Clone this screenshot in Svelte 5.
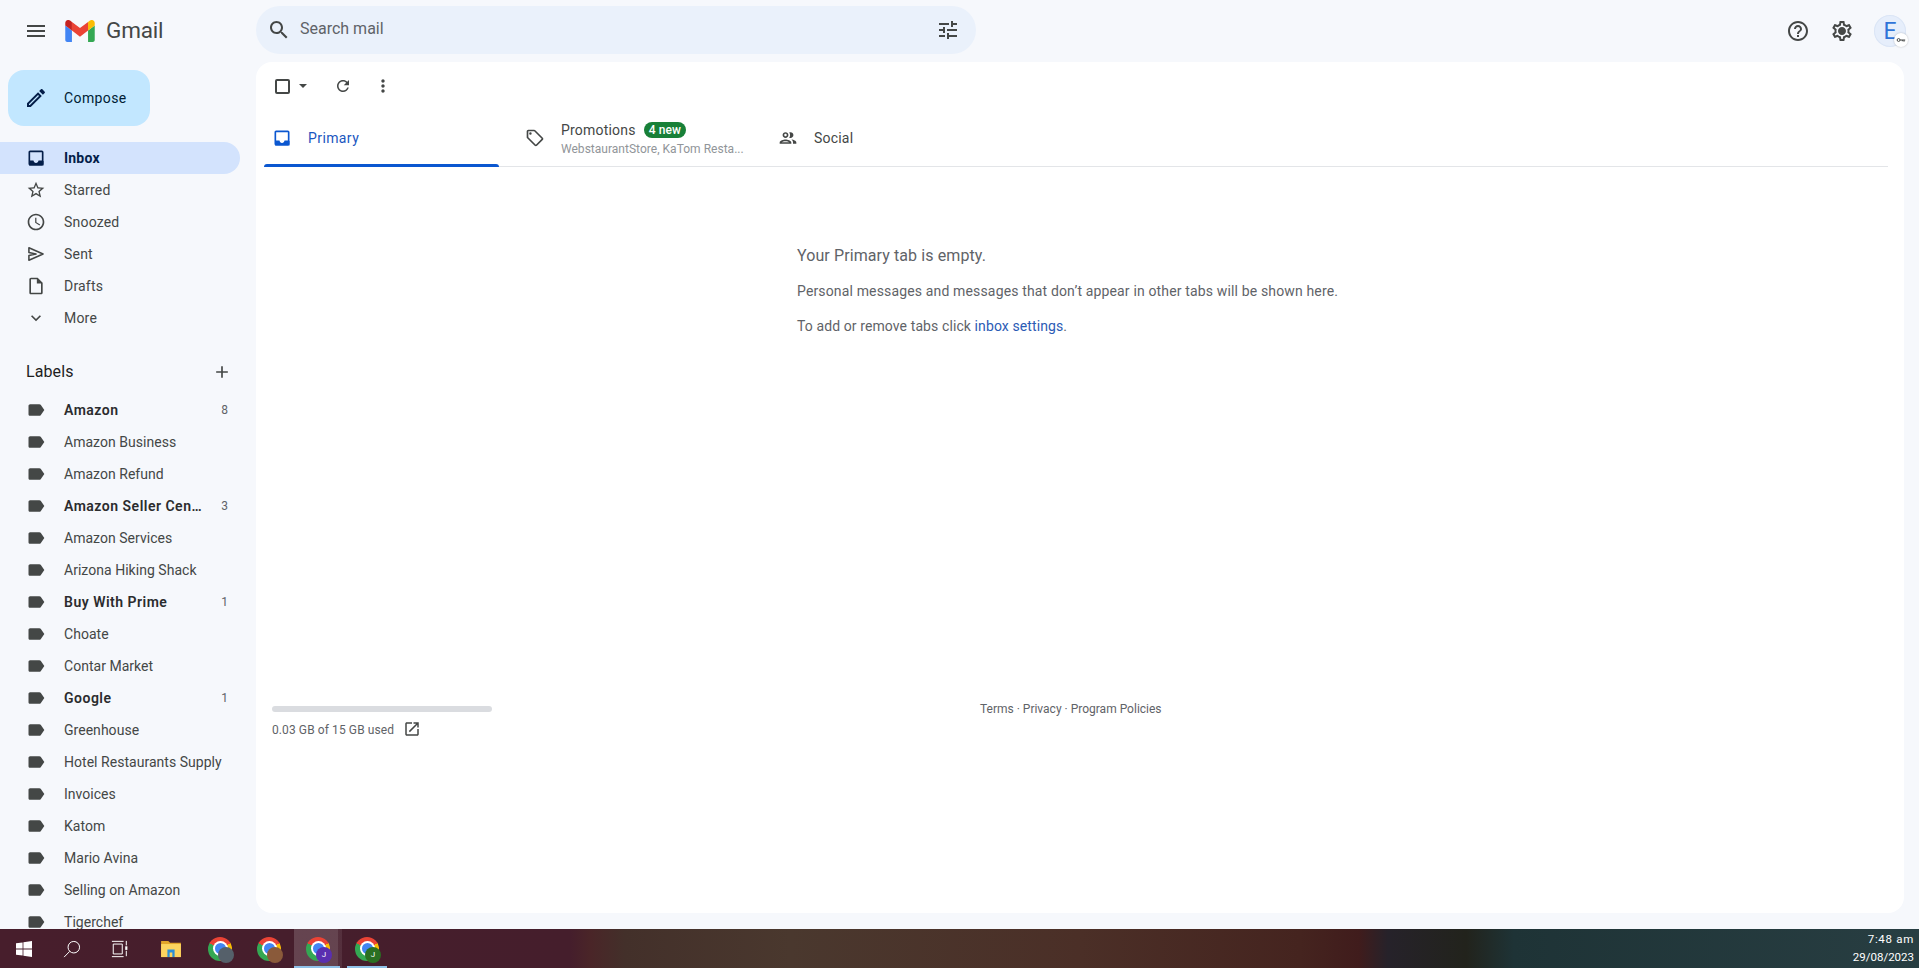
<script>
  const P = {
    menu: 'M3 18h18v-2H3v2zm0-5h18v-2H3v2zm0-7v2h18V6H3z',
    search: 'M15.5 14h-.79l-.28-.27C15.41 12.59 16 11.11 16 9.5 16 5.91 13.09 3 9.5 3S3 5.91 3 9.5 5.91 16 9.5 16c1.61 0 3.09-.59 4.23-1.57l.27.28v.79l5 4.99L20.49 19l-4.99-5zm-6 0C7.01 14 5 11.99 5 9.5S7.01 5 9.5 5 14 7.01 14 9.5 11.99 14 9.5 14z',
    tune: 'M3 17v2h6v-2H3zM3 5v2h10V5H3zm10 16v-2h8v-2h-8v-2h-2v6h2zM7 9v2H3v2h4v2h2V9H7zm14 4v-2H11v2h10zm-6-4h2V7h4V5h-4V3h-2v6z',
    help: 'M11 18h2v-2h-2v2zm1-16C6.48 2 2 6.48 2 12s4.48 10 10 10 10-4.48 10-10S17.52 2 12 2zm0 18c-4.41 0-8-3.59-8-8s3.59-8 8-8 8 3.59 8 8-3.59 8-8 8zm0-14c-2.21 0-4 1.79-4 4h2c0-1.1.9-2 2-2s2 .9 2 2c0 2-3 1.75-3 5h2c0-2.25 3-2.5 3-5 0-2.21-1.79-4-4-4z',
    gear: 'M19.43 12.98c.04-.32.07-.64.07-.98 0-.34-.03-.66-.07-.98l2.11-1.65c.19-.15.24-.42.12-.64l-2-3.46c-.09-.16-.26-.25-.44-.25-.06 0-.12.01-.17.03l-2.49 1c-.52-.4-1.08-.73-1.69-.98l-.38-2.65C14.46 2.18 14.25 2 14 2h-4c-.25 0-.46.18-.49.42l-.38 2.65c-.61.25-1.17.59-1.69.98l-2.49-1c-.06-.02-.12-.03-.18-.03-.17 0-.34.09-.43.25l-2 3.46c-.13.22-.07.49.12.64l2.11 1.65c-.04.32-.07.65-.07.98 0 .33.03.66.07.98l-2.11 1.65c-.19.15-.24.42-.12.64l2 3.46c.09.16.26.25.44.25.06 0 .12-.01.17-.03l2.49-1c.52.4 1.08.73 1.69.98l.38 2.65c.03.24.24.42.49.42h4c.25 0 .46-.18.49-.42l.38-2.65c.61-.25 1.17-.59 1.69-.98l2.49 1c.06.02.12.03.18.03.17 0 .34-.09.43-.25l2-3.46c.12-.22.07-.49-.12-.64l-2.11-1.65zm-1.98-1.71c.04.31.05.52.05.73 0 .21-.02.43-.05.73l-.14 1.13.89.7 1.08.84-.7 1.21-1.27-.51-1.04-.42-.9.68c-.43.32-.84.56-1.25.73l-1.06.43-.16 1.13-.2 1.35h-1.4l-.19-1.35-.16-1.13-1.06-.43c-.43-.18-.83-.41-1.23-.71l-.91-.7-1.06.43-1.27.51-.7-1.21 1.08-.84.89-.7-.14-1.13c-.03-.31-.05-.54-.05-.74s.02-.43.05-.73l.14-1.13-.89-.7-1.08-.84.7-1.21 1.27.51 1.04.42.9-.68c.43-.32.84-.56 1.25-.73l1.06-.43.16-1.13.2-1.35h1.39l.19 1.35.16 1.13 1.06.43c.43.18.83.41 1.23.71l.91.7 1.06-.43 1.27-.51.7 1.21-1.07.85-.89.7.14 1.13zM12 8c-2.21 0-4 1.79-4 4s1.79 4 4 4 4-1.79 4-4-1.79-4-4-4z',
    refresh: 'M17.65 6.35C16.2 4.9 14.21 4 12 4c-4.42 0-7.99 3.58-7.99 8s3.57 8 7.99 8c3.73 0 6.84-2.55 7.73-6h-2.08c-.82 2.33-3.04 4-5.65 4-3.31 0-6-2.69-6-6s2.69-6 6-6c1.66 0 3.14.69 4.22 1.78L13 11h7V4l-2.35 2.35z',
    more: 'M12 8c1.1 0 2-.9 2-2s-.9-2-2-2-2 .9-2 2 .9 2 2 2zm0 2c-1.1 0-2 .9-2 2s.9 2 2 2 2-.9 2-2-.9-2-2-2zm0 6c-1.1 0-2 .9-2 2s.9 2 2 2 2-.9 2-2-.9-2-2-2z',
    inbox: 'M19 3H4.99c-1.11 0-1.98.89-1.98 2L3 19c0 1.1.88 2 1.99 2H19c1.1 0 2-.9 2-2V5c0-1.11-.9-2-2-2zm0 12h-4c0 1.66-1.35 3-3 3s-3-1.34-3-3H4.99V5H19v10z',
    star: 'M22 9.24l-7.19-.62L12 2 9.19 8.63 2 9.24l5.46 4.73L5.82 21 12 17.27 18.18 21l-1.63-7.03L22 9.24zM12 15.4l-3.76 2.27 1-4.28-3.32-2.88 4.38-.38L12 6.1l1.71 4.04 4.38.38-3.32 2.88 1 4.28L12 15.4z',
    clock: 'M11.99 2C6.47 2 2 6.48 2 12s4.47 10 9.99 10C17.52 22 22 17.52 22 12S17.52 2 11.99 2zM12 20c-4.42 0-8-3.58-8-8s3.58-8 8-8 8 3.58 8 8-3.58 8-8 8zm.5-13H11v6l5.25 3.15.75-1.23-4.5-2.67z',
    sent: 'M3.5 4.600v5.600l8.500 1.800-8.500 1.800v5.600L20.500 12z',
    draft: 'M14 2H6c-1.1 0-1.99.9-1.99 2L4 20c0 1.1.89 2 1.99 2H18c1.1 0 2-.9 2-2V8l-6-6zM6 20V4h7v5h5v11H6z',
    chevron: 'M16.59 8.59L12 13.17 7.41 8.59 6 10l6 6 6-6z',
    label: 'M17.63 5.84C17.27 5.33 16.67 5 16 5L5 5.01C3.9 5.01 3 5.9 3 7v10c0 1.1.9 1.99 2 1.99L16 19c.67 0 1.27-.33 1.63-.84L22 12l-4.37-6.16z',
    add: 'M19 13h-6v6h-2v-6H5v-2h6V5h2v6h6v2z',
    tag: 'M21.41 11.58l-9-9C12.05 2.22 11.55 2 11 2H4c-1.1 0-2 .9-2 2v7c0 .55.22 1.05.59 1.42l9 9c.36.36.86.58 1.41.58.55 0 1.05-.22 1.41-.59l7-7c.37-.36.59-.86.59-1.41 0-.55-.23-1.06-.59-1.42zM13 20.01L4 11V4h7v-.01l9 8.99-7 7.02zM6.5 5a1.5 1.5 0 1 0 0 3 1.5 1.5 0 0 0 0-3z',
    people: 'M9 13.75c-2.34 0-7 1.17-7 3.5V19h14v-1.75c0-2.33-4.66-3.5-7-3.5zM4.34 17c.84-.58 2.87-1.25 4.66-1.25s3.82.67 4.66 1.25H4.34zM9 12c1.93 0 3.5-1.57 3.5-3.5S10.93 5 9 5 5.5 6.57 5.5 8.5 7.07 12 9 12zm0-5c.83 0 1.5.67 1.5 1.5S9.83 10 9 10s-1.5-.67-1.5-1.5S8.17 7 9 7zm7.04 6.81c1.16.84 1.96 1.96 1.96 3.44V19h4v-1.75c0-2.02-3.5-3.17-5.96-3.44zM15 12c1.93 0 3.5-1.57 3.5-3.5S16.93 5 15 5c-.54 0-1.04.13-1.5.35.63.89 1 1.98 1 3.15s-.37 2.26-1 3.15c.46.22.96.35 1.5.35z',
    open: 'M19 19H5V5h7V3H5c-1.11 0-2 .9-2 2v14c0 1.1.89 2 2 2h14c1.1 0 2-.9 2-2v-7h-2v7zM14 3v2h3.59l-9.83 9.83 1.41 1.41L19 6.41V10h2V3h-7z',
    pencil: 'M14.06 9.02l.92.92L5.92 19H5v-.92l9.06-9.06M17.66 3c-.25 0-.51.1-.7.29l-1.83 1.83 3.75 3.75 1.83-1.83c.39-.39.39-1.02 0-1.41l-2.34-2.34c-.2-.2-.45-.29-.71-.29zm-3.6 3.19L3 17.25V21h3.75L17.81 9.94l-3.75-3.75z'
  };

  const nav = [
    { name: 'Inbox', icon: 'inbox', active: true },
    { name: 'Starred', icon: 'star' },
    { name: 'Snoozed', icon: 'clock' },
    { name: 'Sent', icon: 'sent' },
    { name: 'Drafts', icon: 'draft' },
    { name: 'More', icon: 'chevron' }
  ];

  const labels = [
    { name: 'Amazon', count: 8 },
    { name: 'Amazon Business' },
    { name: 'Amazon Refund' },
    { name: 'Amazon Seller Cen…', count: 3 },
    { name: 'Amazon Services' },
    { name: 'Arizona Hiking Shack' },
    { name: 'Buy With Prime', count: 1 },
    { name: 'Choate' },
    { name: 'Contar Market' },
    { name: 'Google', count: 1 },
    { name: 'Greenhouse' },
    { name: 'Hotel Restaurants Supply' },
    { name: 'Invoices' },
    { name: 'Katom' },
    { name: 'Mario Avina' },
    { name: 'Selling on Amazon' },
    { name: 'Tigerchef' }
  ];

  const chromes = [
    { id: 'a', badge: 'slate', text: '' },
    { id: 'b', badge: 'dog', text: '' },
    { id: 'c', badge: 'purple', text: 'J', current: true },
    { id: 'd', badge: 'green', text: 'J', running: true }
  ];

  function navClass(n) {
    if (n.active) return 'i20 darkicon';
    if (n.icon === 'sent') return 'i20 outline';
    return 'i20';
  }
</script>

{#snippet icon(name, cls)}
  <svg class={cls} viewBox="0 0 24 24" aria-hidden="true"><path d={P[name]} /></svg>
{/snippet}

<div class="page">
  <div class="window">
    <header class="top">
      <div class="brand">
        <button class="plain menu" aria-label="Main menu">{@render icon('menu', 'i24')}</button>
        <svg class="logo" viewBox="0 0 75 56" aria-label="Gmail logo">
          <path fill="#4285f4" d="M5.1 56H17V27L0 14.2V51c0 2.8 2.3 5 5.1 5z" />
          <path fill="#34a853" d="M58 56h11.9c2.8 0 5.1-2.3 5.1-5V14.2L58 27z" />
          <path fill="#fbbc04" d="M58 5v22l17-12.8V7.6c0-6.3-7.2-9.9-12.2-6.1z" />
          <path fill="#ea4335" d="M17 27V5l20.5 15.4L58 5v22L37.5 42.4z" />
          <path fill="#c5221f" d="M0 7.6v6.6L17 27V5l-4.8-3.6C7.2-2.3 0 1.3 0 7.6z" />
        </svg>
        <span class="wordmark">Gmail</span>
      </div>
      <div class="searchbar">
        {@render icon('search', 'i24')}
        <span class="placeholder">Search mail</span>
        {@render icon('tune', 'i24 tune')}
      </div>
      <div class="actions">
        {@render icon('help', 'i24')}
        {@render icon('gear', 'i24 gear')}
        <div class="avatar">
          <span>E</span>
          <span class="keybadge">
            <svg viewBox="0 0 16 10" class="key"><circle cx="4" cy="5" r="2.4" fill="none" stroke="#444746" stroke-width="1.6" /><path d="M6 4.2h9v1.6h-1.2v2h-1.6v-2h-1.2v1.4H9.4V5.8H6z" fill="#444746" /></svg>
          </span>
        </div>
      </div>
    </header>

    <div class="body">
      <aside class="side">
        <button class="compose">{@render icon('pencil', 'i24')}<span>Compose</span></button>
        <nav class="nav">
          {#each nav as n}
            <div class="row" class:active={n.active}>
              <span class="ic">
                {@render icon(n.icon, navClass(n))}
                {#if n.active}<span class="tray"></span>{/if}
              </span>
              <span class="name">{n.name}</span>
            </div>
          {/each}
        </nav>
        <div class="labelshead">
          <span>Labels</span>
          {@render icon('add', 'i20')}
        </div>
        <div class="labels">
          {#each labels as l}
            <div class="row" class:unread={l.count}>
              <span class="ic">{@render icon('label', 'i20')}</span>
              <span class="name">{l.name}</span>
              {#if l.count}<span class="count">{l.count}</span>{/if}
            </div>
          {/each}
        </div>
      </aside>

      <main class="card">
        <div class="toolbar">
          <span class="checkgroup">
            <span class="check"></span>
            <span class="caret"></span>
          </span>
          {@render icon('refresh', 'i18 refresh')}
          {@render icon('more', 'i20 morev')}
        </div>
        <div class="tabs">
          <div class="tab primary">
            <span class="ic">{@render icon('inbox', 'i20')}<span class="tray blue"></span></span>
            <span>Primary</span>
          </div>
          <div class="tab promo">
            {@render icon('tag', 'i20')}
            <div class="promotext">
              <div class="promoline"><span>Promotions</span><span class="badge">4 new</span></div>
              <div class="sub">WebstaurantStore, KaTom Resta...</div>
            </div>
          </div>
          <div class="tab social">
            {@render icon('people', 'i20')}
            <span>Social</span>
          </div>
        </div>

        <section class="empty">
          <h2>Your Primary tab is empty.</h2>
          <p>Personal messages and messages that don’t appear in other tabs will be shown here.</p>
          <p>To add or remove tabs click <a href="#settings">inbox settings</a>.</p>
        </section>

        <footer class="foot">
          <div class="storage">
            <div class="bar"></div>
            <div class="used"><span>0.03 GB of 15 GB used</span>{@render icon('open', 'i18')}</div>
          </div>
          <div class="terms">Terms · Privacy · Program Policies</div>
        </footer>
      </main>
    </div>
  </div>

  <div class="taskbar">
    <div class="slot">
      <svg class="win" viewBox="0 0 16 16"><path fill="#fff" d="M0 2.3 6.6 1.4v6.2H0zM7.4 1.3 16 0v7.6H7.4zM0 8.4h6.6v6.2L0 13.7zM7.4 8.4H16V16l-8.6-1.3z" /></svg>
    </div>
    <div class="slot">
      <svg class="tb" viewBox="0 0 20 20" fill="none" stroke="#fff" stroke-width="1.1"><circle cx="12" cy="8" r="6.4" /><path d="M7.5 12.6 1.2 19" /></svg>
    </div>
    <div class="slot">
      <svg class="tb" viewBox="0 0 20 20" fill="none" stroke="#fff" stroke-width="1.1"><path d="M1 1.500h13M1 18.500h13M2.500 4.500h10v11h-10zM17 1v5M17 12v6" /><path d="M17 7v4" stroke-width="2.400" /></svg>
    </div>
    <div class="slot">
      <svg class="folder" viewBox="0 0 24 20"><path fill="#e2a52a" d="M1 1h8l2 2h12v16H1z" /><path fill="#fcd45f" d="M1 4.500h22V19H1z" /><path fill="#2b8fd6" d="M8 10.500h8V19h-2.500v-5h-3v5H8z" /></svg>
    </div>
    {#each chromes as c}
      <div class="slot chromeslot" class:current={c.current} class:running={c.running}>
        <span class="chrome">
          <span class="hole"></span>
          <span class={'pip ' + c.badge}>{c.text}</span>
        </span>
      </div>
    {/each}
    <div class="clock">
      <div class="time">7:48 am</div>
      <div>29/08/2023</div>
    </div>
  </div>
</div>

<style>
  :global(body) {
    margin: 0;
    background: #f6f8fc;
    font-family: Roboto, "Liberation Sans", sans-serif;
  }
  .page {
    height: 968px;
    display: flex;
    flex-direction: column;
    overflow: hidden;
    color: #444746;
  }
  .window {
    height: 929px;
    flex: none;
    display: flex;
    flex-direction: column;
    overflow: hidden;
    background: #f6f8fc;
  }
  svg { display: block; fill: #444746; flex: none; }
  .i24 { width: 24px; height: 24px; }
  .i20 { width: 20px; height: 20px; }
  .i18 { width: 18px; height: 18px; }
  .outline { fill: none; stroke: #444746; stroke-width: 1.9; stroke-linejoin: round; }

  .top { height: 62px; flex: none; display: flex; align-items: center; }
  .brand { width: 256px; flex: none; display: flex; align-items: center; padding-left: 24px; box-sizing: border-box; }
  .plain { border: 0; background: none; padding: 0; }
  .menu { margin-right: 17px; }
  .logo { width: 30px; height: 22px; }
  .wordmark { margin-left: 11px; font-size: 22.500px; color: #444746; letter-spacing: -.2px; line-height: 22px; margin-top: -2px; }
  .searchbar {
    width: 720px; height: 48px; border-radius: 24px; background: #eaf1fb;
    display: flex; align-items: center; padding: 0 16px 0 11px; box-sizing: border-box;
    margin-top: -2px;
  }
  .placeholder { flex: 1; margin-left: 9px; font-size: 16px; color: #5f6368; line-height: 20px; margin-bottom: 2px; }
  .actions { margin-left: auto; margin-right: 13px; display: flex; align-items: center; gap: 20px; }
  .avatar {
    width: 32px; height: 32px; border-radius: 50%; background: #e6eefb; color: #2f74d8; font-size: 23px;
    display: flex; align-items: center; justify-content: center; position: relative;
    box-shadow: inset 0 0 0 1px #dbe5f5;
  }
  .keybadge {
    position: absolute; right: -2px; bottom: 0; width: 14px; height: 14px; border-radius: 50%;
    background: #fff; display: flex; align-items: center; justify-content: center;
    box-shadow: 0 0 2px rgba(0,0,0,.25);
  }
  .key { width: 10px; height: 6px; }

  .body { flex: 1; display: flex; min-height: 0; }
  .side { width: 256px; flex: none; }
  .compose {
    margin: 8px 0 0 8px; width: 142px; height: 56px; border: 0; border-radius: 16px; background: #c2e7ff;
    display: flex; align-items: center; padding: 0 0 0 16px; box-sizing: border-box; color: #001d35;
    font: 400 14px Roboto, sans-serif; letter-spacing: .4px;
  }
  .compose span { margin-left: 16px; }
  .compose svg { fill: #041e49; }
  .nav { margin-top: 16px; }
  .row {
    width: 240px; height: 32px; display: flex; align-items: center; box-sizing: border-box;
    padding: 0 12px 0 26px; font-size: 14px; letter-spacing: .2px; border-radius: 0 16px 16px 0;
    color: #444746;
  }
  .ic { position: relative; width: 20px; height: 20px; flex: none; display: block; }
  .name { margin-left: 18px; flex: 1; min-width: 0; white-space: nowrap; }
  .row.active { background: #d3e3fd; color: #041e49; font-weight: 700; }
  .darkicon { fill: #041e49; }
  .tray { position: absolute; left: 2.500px; right: 2.500px; bottom: 2.500px; height: 5px; background: #041e49; clip-path: polygon(0 0, 30% 0, 34% 40%, 50% 60%, 66% 40%, 70% 0, 100% 0, 100% 100%, 0 100%); }
  .tray.blue { background: #0b57d0; }
  .labelshead {
    margin-top: 21px; height: 32px; display: flex; align-items: center; justify-content: space-between;
    padding: 0 8px 0 26px; width: 240px; box-sizing: border-box; font-size: 16px; color: #1f1f1f; letter-spacing: .1px;
  }
  .labelshead svg { margin-top: 2px; }
  .labels { margin-top: 7px; }
  .labels .row { letter-spacing: .03px; }
  .unread .name { font-weight: 600; color: #2b2c2e; letter-spacing: .5px; }
  .count { font-size: 12px; color: #5f6368; margin-left: 8px; width: 8px; text-align: right; letter-spacing: 0; }

  .card {
    width: 1648px; height: 851px; background: #fff; border-radius: 16px; display: flex; flex-direction: column;
    box-sizing: border-box; padding: 0 16px 0 8px;
  }
  .toolbar { height: 48px; flex: none; display: flex; align-items: center; padding-left: 11px; }
  .checkgroup { display: flex; align-items: center; }
  .check { width: 11px; height: 11px; border: 2px solid #444746; border-radius: 2px; display: block; }
  .caret { margin-left: 9px; width: 0; height: 0; border: 4px solid transparent; border-top: 4px solid #444746; border-bottom: 0; }
  .refresh { margin-left: 27px; }
  .morev { margin-left: 21px; }
  .tabs { height: 56px; flex: none; display: flex; border-bottom: 1px solid #e3e5e8; position: relative; }
  .tab { display: flex; align-items: center; font-size: 14px; letter-spacing: .2px; box-sizing: border-box; color: #444746; }
  .tab.primary { width: 235px; padding-left: 8px; color: #1a56c0; letter-spacing: .4px; position: relative; }
  .tab.primary::after { content: ""; position: absolute; left: 0; right: 0; bottom: -1px; height: 3px; background: #0b57d0; border-radius: 3px 3px 0 0; }
  .tab.primary svg { fill: #0b57d0; }
  .tab.primary .ic { margin-right: 16px; }
  .tab.promo { width: 253px; padding-left: 26px; flex: none; }
  .promotext { margin-left: 16px; padding-top: 2px; }
  .promoline { display: flex; align-items: center; height: 20px; }
  .badge {
    margin-left: 8px; height: 16px; padding: 0 5px; border-radius: 8px; background: #188038; color: #fff;
    font-size: 12px; font-weight: 500; line-height: 16px; letter-spacing: .1px;
  }
  .sub { font-size: 12px; color: #919599; line-height: 18px; letter-spacing: .02px; white-space: nowrap; }
  .tab.social { padding-left: 26px; }
  .tab.social svg { margin-right: 16px; }

  .empty { margin: 77px 0 0 533px; }
  .empty h2 { margin: 0; font-size: 16px; font-weight: 400; line-height: 24px; color: #5f6368; letter-spacing: .1px; }
  .empty p { margin: 0; font-size: 14px; line-height: 20px; color: #5f6368; letter-spacing: .15px; }
  .empty h2 + p { margin-top: 13px; }
  .empty p + p { margin-top: 15px; letter-spacing: .1px; }
  .empty a { color: #2b5bb5; text-decoration: none; }

  .foot { margin-top: 370px; display: flex; }
  .storage { width: 220px; margin-left: 8px; }
  .bar { height: 6px; border-radius: 3px; background: #dadce0; }
  .used { display: flex; align-items: center; margin-top: 10px; font-size: 12px; color: #5f6368; letter-spacing: .1px; }
  .used svg { margin-left: 9px; margin-top: -2px; }
  .terms { margin-left: 488px; font-size: 12px; color: #5f6368; margin-top: -4px; letter-spacing: 0; }

  .taskbar {
    height: 39px; flex: none; display: flex; align-items: center; position: relative;
    background: linear-gradient(90deg, #471e2c 0, #451e2c 570px, #4a2528 590px, #43302a 625px, #4a382e 790px, #4b2f27 1080px, #45241f 1300px, #401c1c 1359px, #26222a 1388px, #22231c 1466px, #1e3336 1514px, #283e42 1919px);
  }
  .slot { width: 48px; height: 39px; flex: none; display: flex; align-items: center; justify-content: center; position: relative; }
  .win { width: 16px; height: 16px; }
  .tb { width: 18px; height: 18px; fill: none; }
  .folder { width: 22px; height: 18px; margin-left: 5px; }
  .chromeslot { margin-left: 1px; }
  .slot:nth-child(5) { margin-left: 4px; }
  .current { background: linear-gradient(90deg, rgba(255,255,255,.17) 0 44px, rgba(255,255,255,.08) 44px); }
  .current::after, .running::after { content: ""; position: absolute; left: 0; right: 2px; bottom: 0; height: 2px; background: #8fc1e8; }
  .running::after { left: 4px; right: 4px; }
  .chrome {
    width: 24px; height: 24px; border-radius: 50%; position: relative; display: block;
    background: conic-gradient(#ea4335 0 60deg, #fbbc04 60deg 180deg, #34a853 180deg 300deg, #ea4335 300deg);
  }
  .hole { position: absolute; left: 6.500px; top: 6.500px; width: 11px; height: 11px; box-sizing: border-box; border-radius: 50%; background: #4285f4; box-shadow: 0 0 0 2px #fff; }
  .pip { position: absolute; right: -2px; bottom: -2px; width: 16px; height: 16px; border-radius: 50%; color: #fff; font-size: 8px; line-height: 16px; text-align: center; }
  .pip.slate { background: #55606a; }
  .pip.dog { background: #8a5a3a; }
  .pip.purple { background: #5a2fb0; }
  .pip.green { background: #2a6f22; }
  .clock { margin-left: auto; padding-right: 5px; text-align: right; color: #fff; font-size: 11.500px; line-height: 17.500px; }
  .time { letter-spacing: .7px; }
</style>
